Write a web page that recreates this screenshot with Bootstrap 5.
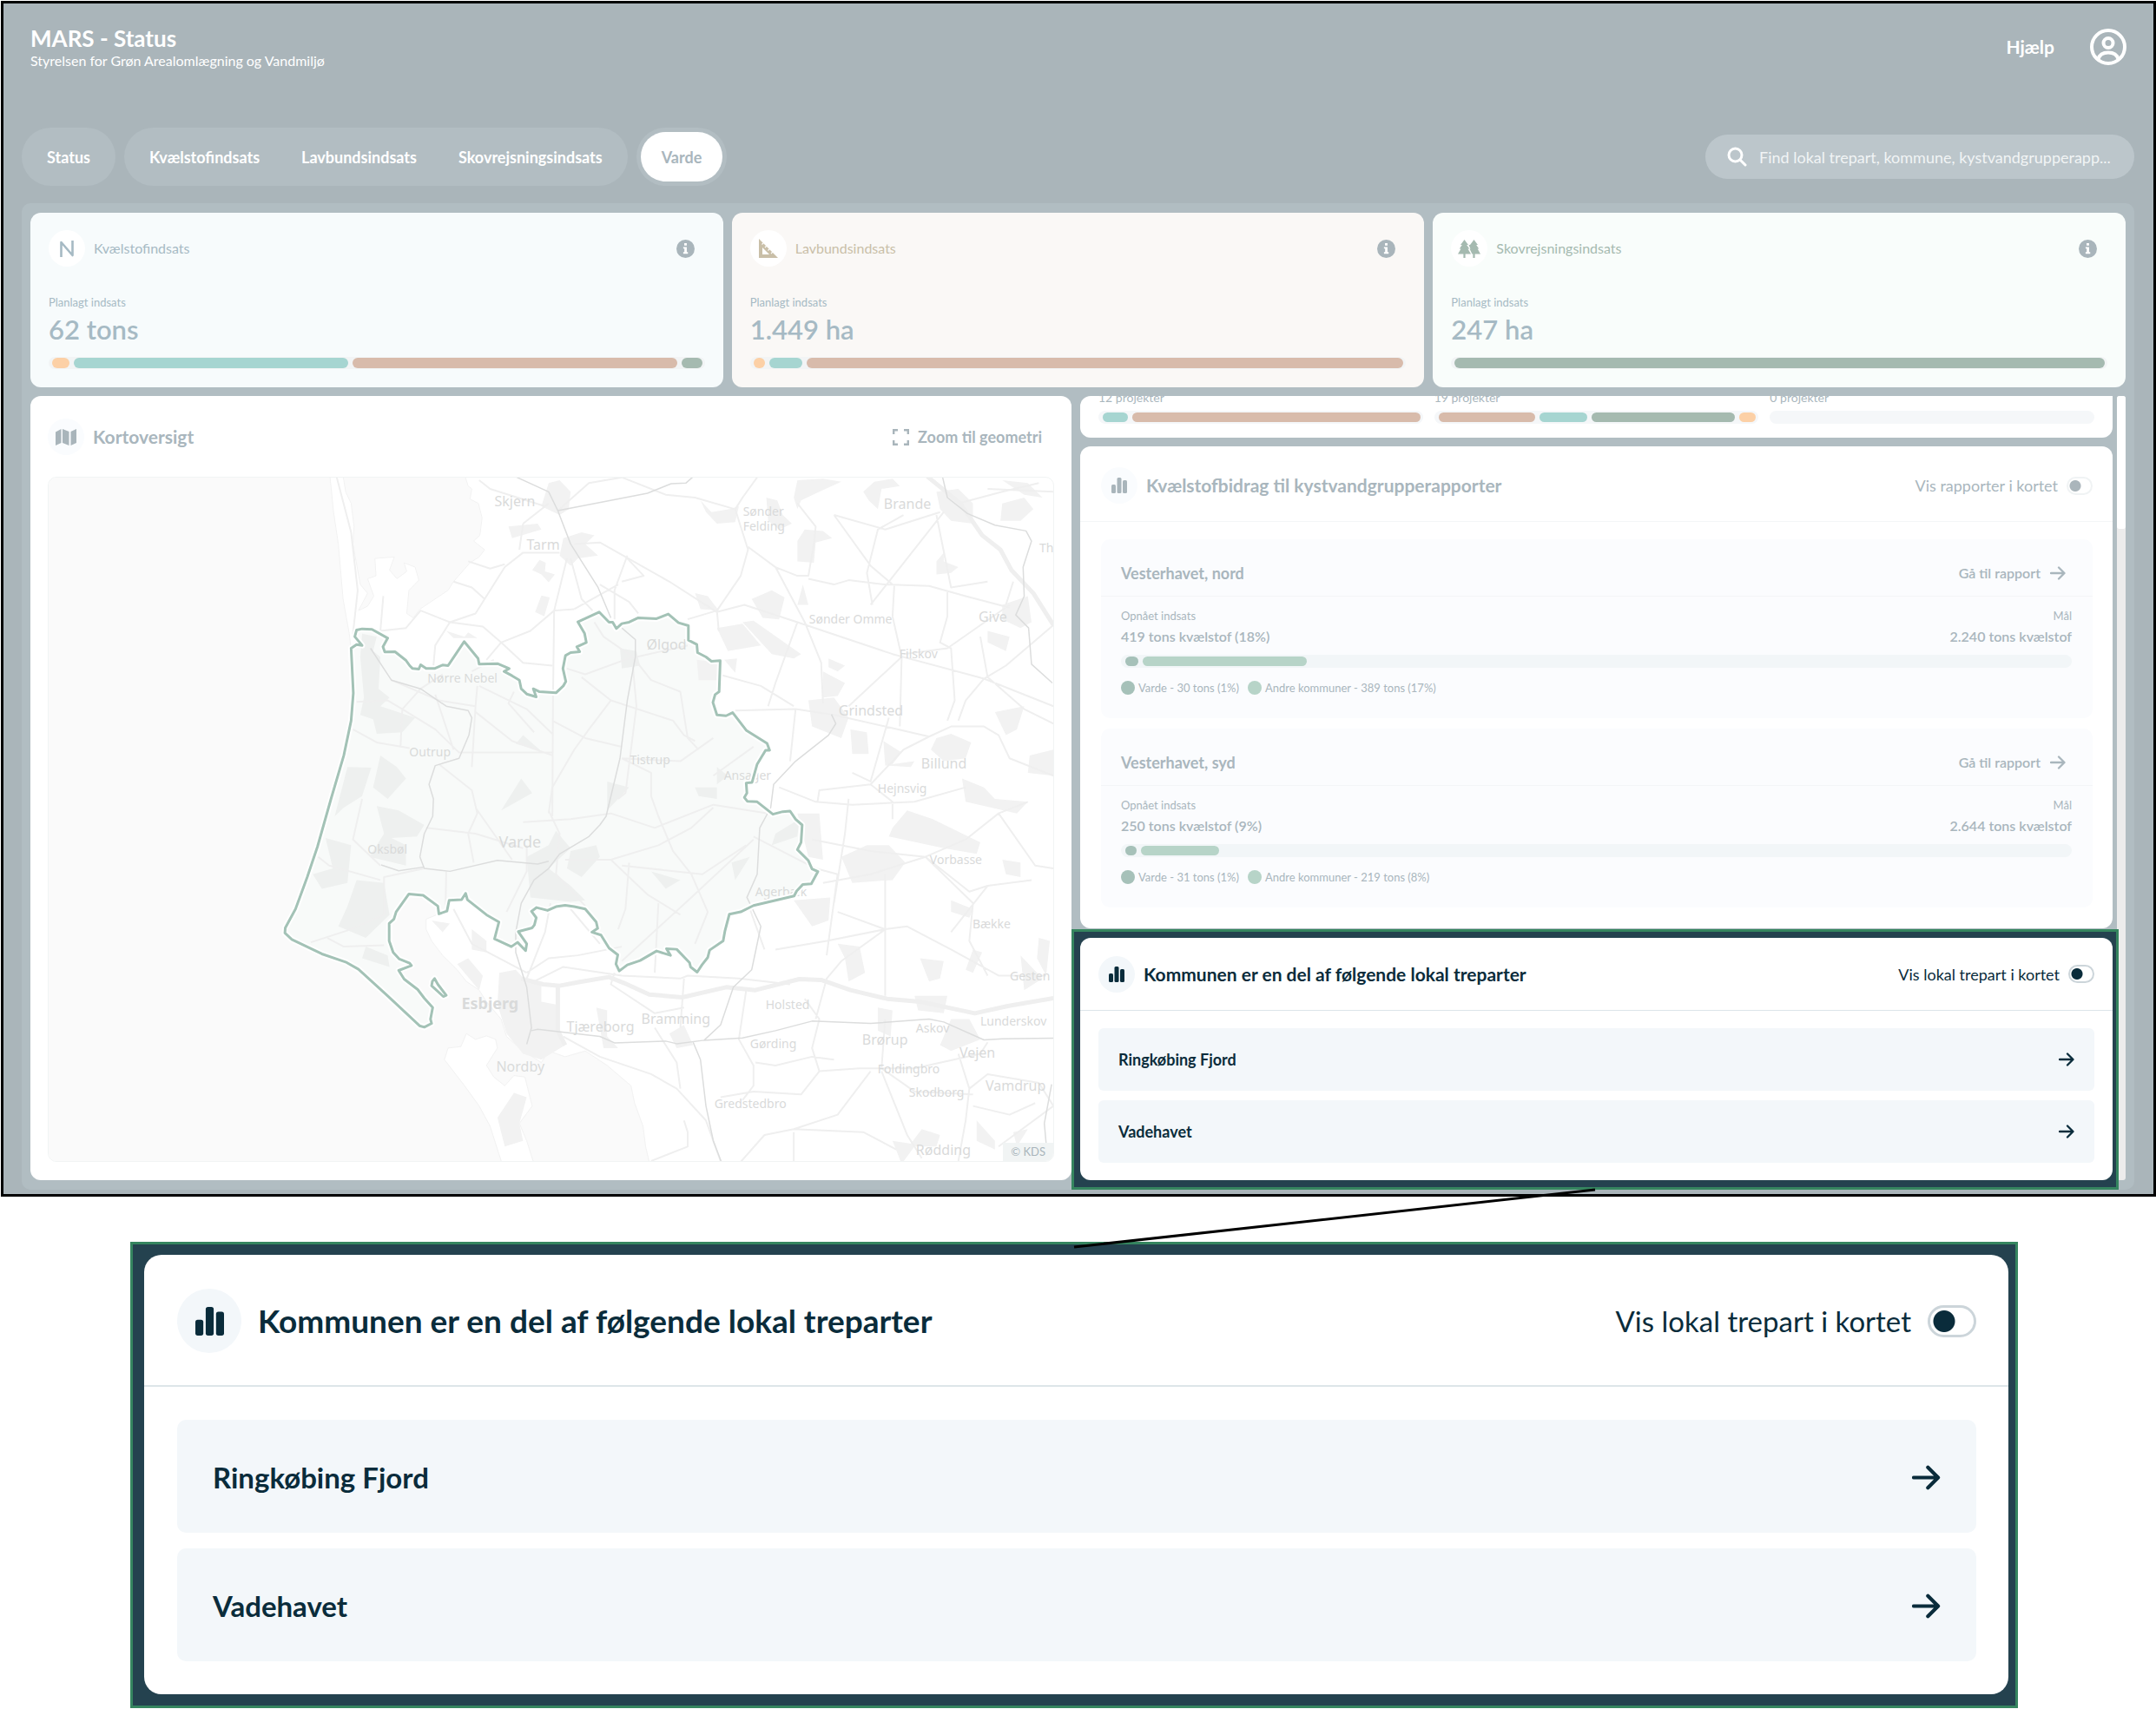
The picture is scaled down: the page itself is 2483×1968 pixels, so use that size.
<!DOCTYPE html>
<html lang="da">
<head>
<meta charset="utf-8">
<meta name="viewport" content="width=device-width, initial-scale=1">
<title>MARS - Status</title>
<link rel="stylesheet" href="https://cdn.jsdelivr.net/npm/bootstrap@5.3.0/dist/css/bootstrap.min.css">
<style>
  :root { --ink:#0a2c3b; --faded:#a9b6bd; --soft:#a6bac4; --navy:#24424f; --frame-green:#35855f; }
  body { font-family:Lato, "Open Sans", sans-serif; background:#fff; color:var(--faded); line-height:20px; overflow-x:hidden; }
  button, input { font-family:inherit; }
  .app-frame { margin:1px 0 0 1px; border:3px solid #000; background:#aab5ba; padding:25px 22px 5px 21px; }
  .brand-title { font-size:26px; line-height:31px; font-weight:700; color:#fff; }
  .brand-sub { font-size:16px; line-height:20px; color:#fff; }
  .topbar { padding:0 9px 0 10px; margin-bottom:67px; }
  .help-link { font-size:21px; font-weight:700; color:#fff; text-decoration:none; }
  .tabs { gap:10px; margin-bottom:20px; }
  .pill { background:#b2bdc2; border-radius:34px; padding:5px; height:67px; }
  .pill button { border:0; background:none; border-radius:29px; height:57px; padding:0 24px; font-size:18px; font-weight:700; color:#fff; }
  .pill button.current { background:#fff; color:var(--faded); }
  .find-box { background:#bcc6cb; border-radius:26px; height:51px; width:494px; padding:0 12px 0 25px; gap:14px; }
  .find-box input { border:0; background:none; outline:0; width:100%; font-size:18px; color:#fff; padding:0; }
  .find-box input::placeholder { color:#f1f4f5; opacity:1; }
  .board { background:#b1bdc2; border-radius:10px; padding:11px 10px; gap:10px; }
  .tile { border-radius:12px; background:#fff; }
  .stat { padding:20px 21px 21px; flex:1 1 0; min-width:0; }
  .tint-n { background:#f7fbfc; color:#a6bac4; } .tint-l { background:#faf8f6; color:#c9bfa8; } .tint-s { background:#f9fdfb; color:#a5bab0; }
  .disc { width:42px; height:42px; border-radius:50%; flex:none; background:#fff; }
  .disc.cool { background:#fafcfe; }
  .stat-name { font-size:16px; }
  .info { width:21px; height:21px; margin:0 12px 0 auto; }
  .tiny { font-size:13px; line-height:18px; }
  .stat .tiny { margin-top:32px; }
  .stat .tiny, .stat .big { color:var(--soft); }
  .big { font-size:31px; line-height:36px; font-weight:600; margin:4px 0 14px; }
  .meter { display:flex; gap:5px; height:14px; border-radius:8px; padding:1px 3px 1px 4px; background:#f2f4f5; }
  .meter.tall { height:15px; padding:2px 3px 2px 5px; background:#f5f7f9; }
  .meter span { flex:1 1 0; border-radius:6px; }
  .meter span.rest { background:none; }
  .c-o { background:#fcd0a6; } .c-t { background:#a6d5d1; } .c-b { background:#d8bbab; } .c-g { background:#a5bab0; }
  .c-v { background:#a6c1b9; } .c-a { background:#b7d4c8; }
  .lower { gap:10px; }
  .map-tile { flex:1159 1 40px; min-width:0; padding:26px 20px 21px; }
  .side { flex:1 1 0; min-width:0; }
  .side-wrap { flex:1204 1 0; min-width:0; gap:5px; }
  .rail { width:10px; background:#ececec; border-radius:3px; }
  .rail div { height:153px; background:#fff; border-radius:3px; }
  .head-20 { font-size:21px; font-weight:700; line-height:26px; }
  .zoom-btn { border:0; background:none; padding:0; margin-right:14px; font-size:18px; font-weight:700; color:var(--faded); gap:10px; }
  .map-box { margin-top:25px; border:1px solid #f1f4f4; border-radius:10px; overflow:hidden; position:relative; flex:1 1 0; min-height:600px; }
  .map-box > svg { position:absolute; inset:0; width:100%; height:100%; }
  .kds { position:absolute; right:0; bottom:0; background:#f1f4f4; font-size:13px; line-height:21px; padding:0 9px; color:#a9b5bb; }
  .clipped { height:48px; overflow:hidden; padding:0 21px 16px; gap:13px; border-radius:12px 0 12px 12px; }
  .clipped > div { flex:1 1 0; }
  .clipped .tiny { font-size:14px; margin-bottom:6px; }
  .rep-head { height:87px; padding:4px 23px 0 24px; border-bottom:1px solid #f4f6f7; }
  .rep-body { padding:20px 23px 24px 24px; gap:12px; }
  .sub { background:#fbfcfe; border-radius:10px; }
  .sub-head { height:66px; padding:12px 31px 0 23px; border-bottom:1px solid #f3f5f7; font-size:18px; font-weight:700; }
  .sub-head a { font-size:16px; font-weight:600; color:var(--faded); text-decoration:none; gap:11px; }
  .sub-body { padding:13px 24px 24px 23px; }
  .amount { font-size:16px; line-height:30px; font-weight:600; margin-bottom:6px; }
  .sub .meter { background:#f2f6f8; }
  .key { margin-top:12px; font-size:13px; line-height:22px; gap:10px; }
  .key i { width:16px; height:16px; border-radius:50%; margin-right:4px; }
  .toggle { display:flex; align-items:center; gap:10px; font-size:18px; margin:0; padding:0; min-height:0; }
  .toggle .form-check-input { margin:0; float:none; width:30px; height:21px; border:2px solid #f0f3f4; border-radius:20px; background:radial-gradient(circle at 8px 50%, #aab5bb 6px, transparent 7px) #fff; }
  .spot { position:relative; z-index:2; background:var(--navy); border:3px solid var(--frame-green); padding:7px 4px 8px 7px; margin:-9px -7px -11px -10px; color:var(--ink); }
  .party-head { height:84px; padding:0 21px; border-bottom:1px solid #dde5e9; }
  .party .disc { background:#f3f7fa; }
  .party-body { padding:20px 21px; gap:11px; }
  .party-row { display:flex; align-items:center; justify-content:space-between; height:72px; border-radius:6px; background:#f3f7fa; padding:0 23px; color:var(--ink); font-size:18px; font-weight:700; text-decoration:none; }
  .party .form-check-input { border:2px solid #ccd5da; background:radial-gradient(circle at 8px 50%, #0a2c3b 6px, transparent 7px) #fff; }
  .callout { position:relative; margin:52px 159px 0 150px; border:3px solid var(--frame-green); background:var(--navy); padding:12px 8px 13px 13px; color:var(--ink); }
  .callout .tile { border-radius:20px; }
  .callout .party-head { height:152px; padding:2px 37px 0 38px; border-bottom-width:2px; }
  .callout .disc { width:74px; height:74px; }
  .callout .head-20 { font-size:37px; line-height:44px; }
  .callout .toggle { font-size:33px; gap:19px; }
  .callout .toggle .form-check-input { width:56px; height:37px; border-width:3px; background:radial-gradient(circle at 16px 50%, #0a2c3b 12px, transparent 13px) #fff; }
  .callout .party-body { padding:38px 37px 38px 38px; gap:18px; }
  .callout .party-row { height:130px; border-radius:10px; padding:2px 41px 0; font-size:33px; }
  .callout .party-head .gap-s { gap:19px; }
  .gap-s { gap:10px; }
  .leader { position:absolute; left:50%; bottom:100%; overflow:visible; z-index:3; }
  .map-line path, .map-line use { fill:none; vector-effect:non-scaling-stroke; stroke-linejoin:round; }
  .map-line .sea { fill:#fafafa; } .map-line .land { fill:#fff; } .map-line .area { fill:#f8faf9; }
  .map-line .town { fill:#f2f2f2; } .map-line .wood { fill:#eef0ef; }
  .places { font-family:"Noto Sans","Open Sans",sans-serif; fill:#d9dada; font-size:14px; }
</style>
<script src="https://cdn.jsdelivr.net/npm/bootstrap@5.3.0/dist/js/bootstrap.bundle.min.js"></script>
</head>
<body>
<svg width="0" height="0" class="position-absolute" aria-hidden="true">
  <symbol id="i-info" viewBox="0 0 16 16"><circle cx="8" cy="8" r="8" fill="#a9b5bb"/><path fill="#fff" d="M6.9 3h2.200v2.100H6.900zM6 6.400h3.100v4.500h1v1.500H6v-1.500h1V7.900H6z"/></symbol>
  <symbol id="i-bars" viewBox="0 0 18 18"><rect x="0" y="8" width="5" height="10" rx="1.500"/><rect x="6.500" y="0" width="5" height="18" rx="1.500"/><rect x="13" y="3" width="5" height="15" rx="1.500"/></symbol>
  <symbol id="i-arrow" viewBox="0 0 18 16"><path d="M1 8h15M10 1.500 16.500 8 10 14.500" fill="none" stroke="currentColor" stroke-width="2.300" stroke-linecap="round" stroke-linejoin="round"/></symbol>
  <defs>
    <path id="edge" vector-effect="non-scaling-stroke" d="M975 857 990 853 1017 855 1060 885 1047 915 1052 933 1080 932 1110 962 1120 980 1128 990 1145 992 1150 977 1165 990 1188 990 1210 978 1225 980 1269 897 1307 955 1310 975 1360 973 1392 990 1378 1000 1400 1015 1420 1030 1425 1060 1440 1078 1466 1088 1458 1060 1475 1070 1520 1074 1540 1050 1547 1035 1539 990 1546 945 1560 935 1585 932 1577 915 1603 900 1598 868 1580 829 1638 795 1665 830 1675 830 1685 852 1700 835 1720 830 1745 815 1795 818 1827 802 1855 832 1882 842 1882 892 1905 907 1907 935 1930 950 1945 965 1969 963 1966 1070 1955 1080 1949 1107 1960 1150 1985 1153 2003 1142 2040 1203 2097 1248 2104 1272 2093 1272 2070 1320 2056 1383 2040 1385 2042 1420 2035 1435 2043 1448 2070 1450 2113 1493 2140 1484 2160 1482 2175 1510 2193 1530 2190 1590 2180 1615 2210 1653 2220 1682 2236 1691 2218 1733 2195 1735 2178 1758 2171 1775 2060 1808 2025 1830 1994 1838 1982 1895 1977 1930 1940 1962 1935 1987 1919 2013 1906 2038 1888 2020 1885 2005 1850 1959 1822 1957 1833 1980 1795 1965 1750 1998 1715 2013 1693 2034 1684 2010 1689 1978 1665 1955 1643 1910 1618 1900 1634 1887 1630 1865 1600 1820 1570 1812 1545 1807 1520 1812 1497 1825 1467 1815 1453 1828 1466 1850 1461 1875 1455 1885 1417 1898 1440 1940 1437 1964 1415 1935 1398 1950 1352 1923 1364 1865 1330 1840 1278 1788 1273 1766 1262 1788 1228 1790 1222 1827 1200 1837 1197 1810 1157 1773 1118 1768 1083 1830 1077 1855 1064 1870 1064 1930 1075 1970 1092 1993 1120 2007 1125 2015 1090 2032 1105 2062 1142 2098 1160 2128 1183 2160 1177 2200 1180 2215 1160 2228 1147 2223 1060 2120 980 2028 945 2003 880 1975 798 1925 779 1903 780 1885 808 1820 840 1710 868 1605 905 1440 940 1290 960 1170 966 1075 960 920 975 907 990 910 970 880zM1188 2060 1197 2080 1220 2118 1212 2122 1180 2085 1182 2070z"/>
  </defs>
</svg>

<main class="app-frame">
  <header class="topbar d-flex justify-content-between align-items-start">
    <div>
      <div class="brand-title">MARS - Status</div>
      <div class="brand-sub">Styrelsen for Grøn Arealomlægning og Vandmiljø</div>
    </div>
    <div class="d-flex align-items-center" style="gap:41px">
      <a class="help-link" href="#">Hjælp</a>
      <button class="btn p-0 border-0 lh-1" aria-label="Profil">
        <svg width="42" height="50" viewBox="0 0 42 50" fill="none" stroke="#fff" stroke-width="4"><circle cx="21" cy="25" r="19"/><circle cx="21" cy="20.500" r="5.500"/><path d="M9.500 39c1.500-5.500 5.500-7.500 11.500-7.500s10 2 11.500 7.500"/></svg>
      </button>
    </div>
  </header>

  <nav class="tabs d-flex align-items-center">
    <div class="pill"><button>Status</button></div>
    <div class="pill d-flex"><button>Kvælstofindsats</button><button>Lavbundsindsats</button><button>Skovrejsningsindsats</button></div>
    <div class="pill"><button class="current">Varde</button></div>
    <form class="find-box d-flex align-items-center ms-auto">
      <svg width="23" height="23" viewBox="0 0 23 23" fill="none" stroke="#fff" stroke-width="3" stroke-linecap="round" class="flex-shrink-0"><circle cx="9.500" cy="9.500" r="7.500"/><path d="m15 15 6 6"/></svg>
      <input type="text" aria-label="Søg" placeholder="Find lokal trepart, kommune, kystvandgrupperapp...">
    </form>
  </nav>

  <section class="board d-flex flex-column">
    <div class="d-flex gap-s">
      <article class="tile stat tint-n">
        <div class="d-flex align-items-center gap-s">
          <span class="disc d-flex align-items-center justify-content-center"><svg width="16" height="19" viewBox="0 0 16 19"><path d="M1.500 19V2l13 15V0" fill="none" stroke="#a6bac4" stroke-width="2.600" stroke-linejoin="round"/></svg></span>
          <span class="stat-name">Kvælstofindsats</span>
          <svg class="info"><use href="#i-info"/></svg>
        </div>
        <div class="tiny">Planlagt indsats</div>
        <div class="big">62 tons</div>
        <div class="meter"><span class="c-o" style="flex-grow:20"></span><span class="c-t" style="flex-grow:317"></span><span class="c-b" style="flex-grow:374"></span><span class="c-g" style="flex-grow:24"></span></div>
      </article>
      <article class="tile stat tint-l">
        <div class="d-flex align-items-center gap-s">
          <span class="disc d-flex align-items-center justify-content-center"><svg width="22" height="22" viewBox="0 0 22 22"><path fill="#c9bfa8" fill-rule="evenodd" d="M0 0 22 22H0zM4 10v8h8z"/><path d="m3.500 6.500 1.800-1.800M7 10l1.800-1.800M10.500 13.500l1.800-1.800M14 17l1.800-1.800" stroke="#fff" stroke-width="1.200"/></svg></span>
          <span class="stat-name">Lavbundsindsats</span>
          <svg class="info"><use href="#i-info"/></svg>
        </div>
        <div class="tiny">Planlagt indsats</div>
        <div class="big">1.449 ha</div>
        <div class="meter"><span class="c-o" style="flex-grow:13"></span><span class="c-t" style="flex-grow:38"></span><span class="c-b" style="flex-grow:688"></span></div>
      </article>
      <article class="tile stat tint-s">
        <div class="d-flex align-items-center gap-s">
          <span class="disc d-flex align-items-center justify-content-center"><svg width="26" height="21" viewBox="0 0 26 21" fill="#a5bab0"><path d="M7.500 0 12 6h-1.800l3 4.500h-1.700L15 16.500H8.600V21H6.400v-4.500H0l3.500-6H1.800l3-4.500H3z"/><path d="M18.500 0 23 6h-1.800l3 4.500h-1.500L26 16.500h-6.400V21h-2.200v-4.500h-1L13.500 10.500h1L12.500 6H14z"/></svg></span>
          <span class="stat-name">Skovrejsningsindsats</span>
          <svg class="info"><use href="#i-info"/></svg>
        </div>
        <div class="tiny">Planlagt indsats</div>
        <div class="big">247 ha</div>
        <div class="meter"><span class="c-g"></span></div>
      </article>
    </div>

    <div class="lower d-flex">
      <article class="tile map-tile d-flex flex-column">
        <div class="d-flex align-items-center gap-s">
          <span class="disc cool d-flex align-items-center justify-content-center"><svg width="24" height="19" viewBox="0 0 24 19" fill="#a9b5bb"><path d="M0 3.500 6.500 0v16L0 19zM8 0l7.500 3v16L8 16zM17.500 3 24 0v16l-6.500 3z"/></svg></span>
          <span class="head-20">Kortoversigt</span>
          <button class="zoom-btn ms-auto d-flex align-items-center"><svg width="19" height="19" viewBox="0 0 19 19" fill="none" stroke="#a9b5bb" stroke-width="2.400"><path d="M1.200 6V1.200H6M13 1.200h4.800V6M17.800 13v4.800H13M6 17.800H1.200V13"/></svg>Zoom til geometri</button>
        </div>
        <div class="map-box">
          <svg viewBox="56 550 1156 787" preserveAspectRatio="xMidYMid slice" role="img" aria-label="Kort over Varde Kommune">
            <g class="map-line" transform="translate(0 440) scale(.42092 .33333)">
              <path class="sea" stroke="#f2f2f2" stroke-width="1" d="M100 300H900L912 450 925 560 938 750 955 870 975 1100 1064 1700 1118 1768 1195 1800 1200 1837 1165 1855 1165 1890 1180 1930 1210 1980 1250 2030 1275 2070 1310 2100 1330 2140 1370 2200 1385 2260 1420 2300 1480 2350 1500 2310 1545 2330 1600 2310 1660 2360 1725 2430 1735 2490 1758 2570 1765 2640 1780 2720H100z"/>
              <path class="sea" stroke="#f2f2f2" stroke-width="1" d="M935 300H1265L1280 360 1290 370 1285 405 1308 420 1318 470 1312 530 1295 550 1325 580 1310 605 1285 625 1240 690 1225 720 1148 785 1130 815 1112 800 1118 720 1145 685 1135 640 1105 625 1112 655 1085 680 1065 650 1078 605 1025 610 1028 670 1005 680 1022 740 1005 775 980 790 1005 730 985 700 965 560 968 500 960 420 945 380z"/>
              <path class="land" stroke="#f2f2f2" stroke-width="1" d="M1275 2250 1260 2295 1225 2300 1215 2340 1270 2430 1310 2500 1340 2570 1360 2650 1378 2720H1465L1440 2620 1420 2560 1455 2500 1435 2400 1405 2395 1380 2430 1350 2400 1330 2360 1360 2300 1355 2270 1330 2258 1300 2270z"/>
              <use href="#edge" style="fill:#f8faf9"/>
              <path class="town" d="M1500 350 1530 340 1560 380 1555 440 1530 460 1480 430zM1540 540 1590 520 1625 530 1600 560 1635 600 1580 610 1560 635 1530 600zM1475 615 1492 625 1490 655 1517 665 1500 692 1480 665 1455 650zM1480 738 1503 745 1488 810 1463 795zM1915 410 1945 450 1995 440 2020 430 2010 485 1960 490 1930 450zM2095 400 2125 410 2140 460 2165 490 2130 510 2100 480zM2170 400 2180 340 2250 335 2300 345 2240 380 2190 410 2180 440zM2360 380 2390 345 2440 335 2460 360 2410 370 2400 440 2375 410zM2200 510 2250 515 2275 540 2230 555 2225 625 2180 620 2180 550zM2560 380 2620 370 2660 420 2660 490 2600 480 2570 440zM2740 420 2800 400 2825 440 2790 480 2735 480zM2740 340 2810 350 2850 400 2800 390zM2560 620 2580 590 2580 620 2620 640 2600 660 2560 665zM2055 750 2110 720 2145 745 2130 820 2085 815zM2180 770 2195 700 2210 770zM1900 730 1935 740 1965 790 1915 785zM1960 850 2030 835 2080 910 1990 930zM2030 830 2060 825 2190 940 2170 955 2110 940zM1980 960 2015 955 2010 1005zM1905 960 1965 970 1960 1030 1910 1030zM2265 955 2310 980 2290 1000 2265 985zM2250 1000 2310 1040 2290 1085 2250 1090zM2210 1100 2280 1090 2320 1160 2300 1230 2220 1190zM2325 1200 2370 1210 2375 1285 2330 1285zM2415 1240 2465 1280 2440 1320 2500 1310 2490 1330 2420 1325zM2560 1230 2600 1215 2655 1245 2640 1300 2580 1310 2545 1270zM2740 770 2810 740 2820 830 2790 850 2740 820zM2700 860 2760 880 2750 930 2700 900zM2720 1140 2800 1120 2780 1200 2750 1220zM2815 1290 2880 1270V1360L2810 1350zM2630 1370 2690 1400 2720 1440 2810 1450 2780 1490 2640 1450zM2440 1540 2480 1480 2550 1510 2680 1590 2670 1630 2580 1610 2430 1570zM2300 1640 2370 1600 2430 1600 2475 1660 2440 1720 2330 1730zM2180 1490 2240 1490 2250 1650 2210 1640zM2170 1790 2270 1780 2265 1860 2220 1880zM2290 1940 2350 1950 2365 2040 2320 2070 2310 1990zM2515 1990 2580 2000 2570 2060 2540 2070zM2660 1960 2685 1970 2660 2040 2640 2030zM2500 2120 2590 2120 2580 2180 2510 2170zM2400 2160 2440 2170 2435 2260 2400 2240zM2600 2200 2650 2200 2680 2270 2600 2310 2570 2290zM1830 2250 1870 2220 1895 2290 1850 2300zM1630 2160 1660 2170 1660 2260 1690 2300 1650 2300zM2465 2700 2440 2620 2490 2630 2520 2580 2570 2600 2560 2640 2500 2640zM2670 2550 2720 2620 2720 2650 2670 2620zM2770 2590 2810 2580 2780 2640zM2840 1920 2870 1930 2860 2050 2835 1990zM2790 1980 2850 2060 2800 2100zM2600 1790 2660 1820 2650 1850 2600 1830zM2740 1650 2790 1660 2790 1710 2750 1700zM1390 500 1470 490 1480 510 1400 540z"/>
              <path class="town" d="M1180 1860 1230 1870 1210 1900zM1250 2010 1280 1990 1320 2050 1310 2100zM1290 1890 1330 1930 1330 1970 1290 1960zM1365 2040 1410 2030 1440 2070 1480 2080 1480 2140 1520 2150 1525 2240 1545 2290 1480 2340 1430 2320 1385 2250 1360 2150zM1405 2455 1440 2470 1420 2560 1430 2620 1380 2640 1360 2540zM1220 860 1270 880 1280 865 1305 885 1240 885z"/>
              <path class="wood" d="M990 870 1030 880 1020 930 1040 950 1035 1060 1065 1090 1040 1120 1135 1160 1100 1210 1030 1215 1020 1165 985 1150 995 1090 985 950zM950 1330 1015 1332 990 1430 940 1470 915 1500zM1040 1290 1085 1330 1110 1370 1060 1440 1020 1400zM1030 1465 1090 1480 1160 1530 1140 1570 1070 1575 1110 1600 1110 1670 1010 1640 1050 1560zM890 1575 960 1600 950 1730 880 1750 855 1700 910 1680zM975 1720 1050 1730 1065 1840 1000 1920 925 1880 950 1810zM1000 1950 1060 1980 1065 2020 990 1990zM1430 1220 1480 1275 1410 1250zM1425 1370 1455 1420 1370 1480zM1440 1640 1500 1600 1520 1550 1560 1610 1500 1680 1560 1740 1600 1790 1560 1795 1450 1780zM1560 1620 1630 1600 1640 1640 1590 1710 1550 1680zM1780 1690 1860 1720 1820 1750zM1695 920 1740 930 1750 980 1700 990zM1660 1380 1720 1400 1660 1480zM1900 1400 1960 1400 1960 1440 1910 1430zM1960 1330 1990 1360 1960 1390zM2120 1560 2185 1510 2180 1570 2110 1600zM2000 1660 2050 1640 2010 1720z"/>
              <g stroke="#efefef" stroke-width="2">
                <path d="M920 327 960 520 978 720 965 870M1048 740 1040 860 1110 850 1150 790 1230 830 1300 800 1380 640 1430 590 1530 590M1280 620 1340 645 1380 630M1240 690 1290 710 1325 750M1230 830 1320 845 1370 900 1430 970 1510 980M1370 900 1450 860 1515 790 1570 785M1550 610 1515 790 1512 1080 1510 1500M1370 900 1330 960M1230 830 1190 910 1185 980M1430 490 1420 580M1430 490 1500 420M1310 340 1340 370 1490 430"/>
                <path d="M975 1105 1060 1100 1100 1130 1150 1060 1210 1010M1070 1030 1200 1100 1300 1120 1305 1050M1100 1130 1095 1260M1190 1080 1240 1270M1100 1130 1190 1200 1255 1280 1510 1280M965 1200 1030 1245 1120 1265M1300 1120 1290 1330M1300 1140 1400 1240 1510 1290M1200 1320 1290 1410 1305 1490 1280 1560 1295 1660M1165 1540 1300 1560 1430 1610M990 1440 965 1580 1040 1670M870 1640 900 1670 1040 1720M850 1935 960 1890 1050 1840 1050 1710 1160 1680M895 1920 940 1950 1050 1945M1220 1690 1218 1820M1240 1820 1290 1940 1440 2040M1300 1470 1400 1650M1385 1830 1440 1690 1440 1600M1310 1050 1440 1130 1510 1215M1405 1070 1390 1110 1460 1210M1290 1000 1350 960"/>
                <path d="M1570 560 1640 555 1830 690 1960 795 2035 770 2180 830 2440 940 2690 1025 2880 1120M1525 445 1610 350 1700 330 1820 390 1900 400 2010 440 2030 400 2070 330M2010 440 2045 580 2025 670 1960 790 1965 860M2045 570 2120 640 2180 670 2210 670 2225 560 2230 500 2180 420M1880 820 1960 790M2120 640 2200 830 2245 970 2250 1110M2210 680 2280 700 2320 685 2420 700 2540 705 2640 740 2760 780M2280 460 2380 635 2440 700M2280 460 2420 510 2570 450M2470 460 2400 510 2370 660 2385 770M2580 450 2430 690 2380 770M2560 460 2600 710 2700 690M2445 700 2440 810 2465 950 2460 1190M2590 720 2590 810 2570 900 2600 920 2610 1100 2590 1170M2320 1120 2465 950M2180 830 2120 1040 2100 1120M1965 1010 2080 1050 2170 1120M2010 1135 2175 1130 2280 1150 2420 1190 2540 1225 2600 1190 2690 1190 2730 1220 2760 1300 2880 1360M2175 1130 2160 1310M2430 1160 2380 1380 2330 1350M2540 1225 2470 1270 2380 1390 2240 1410 2235 1450M2380 1390 2440 1450 2440 1510M2130 1400 2230 1450 2330 1460 2500 1450 2640 1400M2880 840 2750 980 2690 1025 2640 1100 2620 1170M2760 770 2590 920 2470 940M2680 880 2700 1020 2800 1130 2880 1180M2770 690 2750 770M2700 370 2880 380M2620 420 2740 380 2840 350"/>
                <path d="M1640 700 1720 760 1745 800M1560 610 1590 750 1620 790M1715 600 1680 720 1680 820M1715 610 1760 670 1700 690M1570 785 1690 700M1625 830 1650 880 1730 950 1780 1030 1860 1070 1880 1230 1910 1270M1730 950 1600 1010 1550 990M1740 950 1880 910M1590 1020 1670 1100 1840 1170 1870 1220 1900 1240M1670 1100 1610 1200 1570 1270 1510 1400 1500 1490M1510 1170 1600 1230 1700 1260M1730 980 1740 1120 1710 1420 1690 1440M1700 1300 1780 1350 1780 1430 1800 1500 1840 1620 1890 1700 1935 1830 1900 1940M1700 1300 1860 1310 1950 1230M1950 1360 2060 1260M1430 1520 1560 1510 1670 1490 1790 1540 1950 1460 2100 1490M1500 1480 1530 1560 1520 1700 1600 1810M1545 1650 1670 1650 1800 1600 1890 1540 1950 1470M1670 1650 1770 1770 1860 1840M1720 1660 1710 1820 1690 1890M1700 1670 1920 1700 2040 1600M2060 1580 1890 1780 1700 2000M2060 1570 2230 1680 2290 1700M1800 1800 1790 2040M1560 1820 1640 1940"/>
                <path d="M1440 2040 1500 1990 1580 1980 1700 1950M1505 1800 1490 1900 1440 2060M1460 2070 1540 2020 1700 2050 1860 2060 1880 2050 2020 2060 2160 2080M1680 2040 1670 2080 1790 2180 1870 2160M1870 2060 1860 2230M1540 2260 1640 2330 1780 2390 1850 2440 1930 2550 1970 2690M1790 2230 1850 2350 1860 2440M1870 2550 1880 2590 1880 2640 1780 2690M2040 2100 2020 2270 2060 2360 2060 2430 2030 2480M2200 2130 2240 2200 2220 2300 2240 2380 2350 2370 2500 2370 2680 2320 2700 2280M2065 2350 2120 2360 2220 2330 2280 2340M2380 2380 2290 2530 2170 2580 2090 2600 2020 2700M2170 2580 2360 2590 2450 2650M2170 2590 2170 2690M2410 2380 2480 2600 2520 2680M2420 2200 2410 2370 2500 2450 2660 2460M2620 2320 2650 2440 2640 2550 2620 2690M2650 2440 2700 2390 2840 2420 2880 2500 2730 2640M2660 2500 2760 2530 2830 2490M1970 2470 2060 2450 2190 2460 2240 2380M2120 1960 2260 1930 2420 1890 2480 1880 2600 1960 2730 2050 2860 2050M2290 1830 2420 1890 2420 2120M2420 1890 2300 2000 2260 2060 2230 2200M2290 1700 2260 1980M2220 1580 2380 1620 2530 1640 2660 1800 2650 1930 2700 2050M2250 1730 2380 1700 2530 1640 2640 1580 2730 1490 2810 1450M2530 1640 2650 1760 2700 1740 2820 1720M2320 1440 2310 1560 2280 1800M2420 1700 2420 1890M2730 1490 2830 1670 2880 1680M2600 1900 2700 1740M2050 1820 2090 1960"/>
              </g>
              <path stroke="#efefef" stroke-width="5" d="M1425 2060 1485 2080 1530 2085 1585 2072 1665 2055 1705 2075 1775 2115 1865 2125 1985 2090 2065 2100 2185 2062 2245 2065 2325 2100 2425 2130 2515 2140 2665 2180 2755 2155 2880 2128M1525 2090V2240L1545 2290M2535 327 2625 420 2685 530 2735 580 2765 650 2825 730 2880 840"/>
              <path stroke="#dcdddd" stroke-width="1.500" d="M1413 330 1500 380 1525 445 1560 560 1635 710 1670 815M1700 850 1737 890V950L1715 1100 1695 1300 1657 1500 1640 1530 1610 1570 1530 1630 1500 1680 1460 1720 1425 1800 1410 1900 1410 1970 1440 2090 1453 2230 1440 2287M1525 445 1660 412 1770 385 1835 352 1875 350 1893 330M2577 330 2590 400 2645 455 2720 495 2805 515 2820 550 2797 640 2800 740 2777 805 2812 850 2820 975 2877 1040M2273 1148 2285 1180 2265 1220 2175 1310 2115 1390 2107 1470 2077 1540 2070 1700 2042 1780 2080 1880 2055 2030 2005 2090 1970 2220 1925 2273M1453 2240 1470 2235 1640 2260 1680 2282 1820 2276 1850 2285 1925 2273 2030 2265 2120 2240 2220 2207 2380 2215 2540 2200 2580 2210 2690 2272 2740 2268 2880 2266M1895 2280 1915 2340 1930 2500 1950 2620 1972 2693M1013 920 1070 1030 1150 1060 1220 1120 1280 1135 1290 1160 1282 1220 1255 1300 1190 1325 1173 1390 1185 1440 1183 1500 1160 1560 1148 1640 1160 1680 1230 1690 1360 1652 1470 1665 1500 1655M1042 1668 1090 1688 1160 1675M2875 2425 2855 2560 2860 2630"/>
            </g>
            <g class="places">
              <g font-size="16"><text x="569" y="583">Skjern</text><text x="606" y="633">Tarm</text><text x="1017" y="586">Brande</text><text x="1126" y="716">Give</text><text x="744" y="748">Ølgod</text><text x="965" y="824">Grindsted</text><text x="1060" y="885">Billund</text><text x="571" y="1234">Nordby</text><text x="652" y="1188">Tjæreborg</text><text x="738" y="1179">Bramming</text><text x="992" y="1203">Brørup</text><text x="1104" y="1218">Vejen</text><text x="1134" y="1256">Vamdrup</text><text x="1054" y="1330">Rødding</text></g>
              <text x="492" y="786">Nørre Nebel</text><text x="471" y="871">Outrup</text><text x="855" y="594">Sønder</text><text x="855" y="611">Felding</text><text x="1196" y="636">Th</text><text x="931" y="718">Sønder Omme</text><text x="1035" y="758">Filskov</text><text x="1010" y="913">Hejnsvig</text><text x="725" y="880">Tistrup</text><text x="833" y="898">Ansager</text><text x="423" y="983">Oksbøl</text><text x="881" y="1162">Holsted</text><text x="863" y="1207">Gørding</text><text x="869" y="1032">Agerbæk</text><text x="1070" y="995">Vorbasse</text><text x="1119" y="1069">Bække</text><text x="1162" y="1129">Gesten</text><text x="1128" y="1181">Lunderskov</text><text x="1054" y="1189">Askov</text><text x="1010" y="1236">Foldingbro</text><text x="1046" y="1263">Skodborg</text><text x="822" y="1276">Gredstedbro</text>
              <text x="574" y="976" font-size="18">Varde</text><text x="531" y="1162" font-size="18" font-weight="700">Esbjerg</text>
            </g>
            <g class="map-line" transform="translate(0 440) scale(.42092 .33333)">
              <use href="#edge" stroke="#fff" stroke-width="7"/>
              <use href="#edge" stroke="#a3c2b6" stroke-width="3"/>
            </g>
          </svg>
          <div class="kds">© KDS</div>
        </div>
      </article>

      <div class="side-wrap d-flex">
        <div class="side d-flex flex-column gap-s">
          <article class="tile clipped d-flex align-items-end">
            <div><div class="tiny">12 projekter</div><div class="meter tall"><span class="c-t" style="flex-grow:29"></span><span class="c-b" style="flex-grow:332"></span></div></div>
            <div><div class="tiny">19 projekter</div><div class="meter tall"><span class="c-b" style="flex-grow:112"></span><span class="c-t" style="flex-grow:55"></span><span class="c-g" style="flex-grow:166"></span><span class="c-o" style="flex-grow:19"></span></div></div>
            <div><div class="tiny">0 projekter</div><div class="meter tall"></div></div>
          </article>
          <article class="tile">
            <div class="rep-head d-flex align-items-center justify-content-between">
              <div class="d-flex align-items-center gap-s"><span class="disc cool d-flex align-items-center justify-content-center"><svg width="18" height="18" fill="#a9b5bb"><use href="#i-bars"/></svg></span><span class="head-20">Kvælstofbidrag til kystvandgrupperapporter</span></div>
              <div class="form-check form-switch toggle"><label for="t1">Vis rapporter i kortet</label><input class="form-check-input" type="checkbox" role="switch" id="t1"></div>
            </div>
            <div class="rep-body d-flex flex-column">
              <section class="sub">
                <div class="sub-head d-flex align-items-center justify-content-between"><span>Vesterhavet, nord</span><a href="#" class="d-flex align-items-center">Gå til rapport<svg width="18" height="16"><use href="#i-arrow"/></svg></a></div>
                <div class="sub-body">
                  <div class="d-flex justify-content-between tiny"><span>Opnået indsats</span><span>Mål</span></div>
                  <div class="d-flex justify-content-between amount"><span>419 tons kvælstof (18%)</span><span>2.240 tons kvælstof</span></div>
                  <div class="meter tall"><span class="c-v" style="flex-grow:15"></span><span class="c-a" style="flex-grow:189"></span><span class="rest" style="flex-grow:873"></span></div>
                  <div class="key d-flex"><span class="d-flex align-items-center"><i class="c-v"></i>Varde - 30 tons (1%)</span><span class="d-flex align-items-center"><i class="c-a"></i>Andre kommuner - 389 tons (17%)</span></div>
                </div>
              </section>
              <section class="sub">
                <div class="sub-head d-flex align-items-center justify-content-between"><span>Vesterhavet, syd</span><a href="#" class="d-flex align-items-center">Gå til rapport<svg width="18" height="16"><use href="#i-arrow"/></svg></a></div>
                <div class="sub-body">
                  <div class="d-flex justify-content-between tiny"><span>Opnået indsats</span><span>Mål</span></div>
                  <div class="d-flex justify-content-between amount"><span>250 tons kvælstof (9%)</span><span>2.644 tons kvælstof</span></div>
                  <div class="meter tall"><span class="c-v" style="flex-grow:13"></span><span class="c-a" style="flex-grow:90"></span><span class="rest" style="flex-grow:974"></span></div>
                  <div class="key d-flex"><span class="d-flex align-items-center"><i class="c-v"></i>Varde - 31 tons (1%)</span><span class="d-flex align-items-center"><i class="c-a"></i>Andre kommuner - 219 tons (8%)</span></div>
                </div>
              </section>
            </div>
          </article>
          <div class="spot">
            <article class="tile party">
              <div class="party-head d-flex align-items-center justify-content-between">
                <div class="d-flex align-items-center gap-s"><span class="disc d-flex align-items-center justify-content-center"><svg width="18" height="18" fill="#0a2c3b"><use href="#i-bars"/></svg></span><span class="head-20">Kommunen er en del af følgende lokal treparter</span></div>
                <div class="form-check form-switch toggle"><label for="t2">Vis lokal trepart i kortet</label><input class="form-check-input" type="checkbox" role="switch" id="t2"></div>
              </div>
              <div class="party-body d-flex flex-column">
                <a class="party-row" href="#">Ringkøbing Fjord<svg width="18" height="16"><use href="#i-arrow"/></svg></a>
                <a class="party-row" href="#">Vadehavet<svg width="18" height="16"><use href="#i-arrow"/></svg></a>
              </div>
            </article>
          </div>
        </div>
        <div class="rail"><div></div></div>
      </div>
    </div>
  </section>
</main>

<section class="callout">
  <svg class="leader" width="600" height="66" viewBox="0 0 600 66"><path d="M0 69 600 3" stroke="#000" stroke-width="3"/></svg>
  <article class="tile party">
    <div class="party-head d-flex align-items-center justify-content-between">
      <div class="d-flex align-items-center gap-s"><span class="disc d-flex align-items-center justify-content-center"><svg width="33" height="33" fill="#0a2c3b"><use href="#i-bars"/></svg></span><span class="head-20">Kommunen er en del af følgende lokal treparter</span></div>
      <div class="form-check form-switch toggle"><label for="t3">Vis lokal trepart i kortet</label><input class="form-check-input" type="checkbox" role="switch" id="t3"></div>
    </div>
    <div class="party-body d-flex flex-column">
      <a class="party-row" href="#">Ringkøbing Fjord<svg width="33" height="29"><use href="#i-arrow"/></svg></a>
      <a class="party-row" href="#">Vadehavet<svg width="33" height="29"><use href="#i-arrow"/></svg></a>
    </div>
  </article>
</section>
</body>
</html>
